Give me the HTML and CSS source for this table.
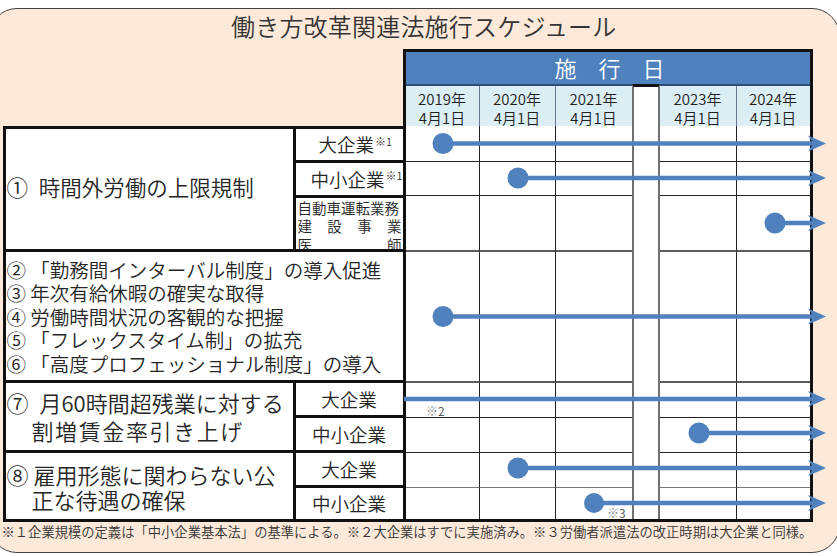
FILE: index.html
```html
<!DOCTYPE html>
<html lang="ja">
<head>
<meta charset="utf-8">
<title>働き方改革関連法施行スケジュール</title>
<link rel="stylesheet" href="styles.css">
</head>
<body>
<div class="frame">
  <div class="title">働き方改革関連法施行スケジュール</div>

  <div class="head">
    <div class="bar">施　行　日</div>
    <div class="dates">
      <div class="d">2019年<br>4月1日</div>
      <div class="d">2020年<br>4月1日</div>
      <div class="d">2021年<br>4月1日</div>
      <div class="d-gap"></div>
      <div class="d">2023年<br>4月1日</div>
      <div class="d">2024年<br>4月1日</div>
    </div>
  </div>

  <div class="body">
    <div class="lt">
      <div class="grp g1">
        <div class="lbl lbl-a">①&#8194;時間外労働の上限規制</div>
        <div class="subs">
          <div class="sub s-a1"><span class="sub-t">大企業</span><span class="sup">※1</span></div>
          <div class="sub s-a2"><span class="sub-t">中小企業</span><span class="sup">※1</span></div>
          <div class="sub s-a3">
            <div class="jl">自動車運転業務</div>
            <div class="jl jd"><span>建</span><span>設</span><span>事</span><span>業</span></div>
            <div class="jl jd"><span>医</span><span>師</span></div>
          </div>
        </div>
      </div>
      <div class="grp g2">
        <div class="lbl lbl-b">
          <div>② 「勤務間インターバル制度」の導入促進</div>
          <div>③ 年次有給休暇の確実な取得</div>
          <div>④ 労働時間状況の客観的な把握</div>
          <div>⑤ 「フレックスタイム制」の拡充</div>
          <div>⑥ 「高度プロフェッショナル制度」の導入</div>
        </div>
      </div>
      <div class="grp g3">
        <div class="lbl lbl-c">
          <div>⑦&#8194;月60時間超残業に対する</div>
          <div class="ind wide">割増賃金率引き上げ</div>
        </div>
        <div class="subs">
          <div class="sub s-c1 ctr">大企業</div>
          <div class="sub s-c2 ctr">中小企業</div>
        </div>
      </div>
      <div class="grp g4">
        <div class="lbl lbl-d">
          <div>⑧ 雇用形態に関わらない公</div>
          <div class="ind">正な待遇の確保</div>
        </div>
        <div class="subs">
          <div class="sub s-d1 ctr">大企業</div>
          <div class="sub s-d2 ctr">中小企業</div>
        </div>
      </div>
    </div>

    <div class="rg">
      <div class="gap"></div>
      <div class="c"></div><div class="c"></div><div class="c"></div><div class="c"></div><div class="c"></div>
      <div class="c"></div><div class="c"></div><div class="c"></div><div class="c"></div><div class="c"></div>
      <div class="c"></div><div class="c"></div><div class="c"></div><div class="c"></div><div class="c"></div>
      <div class="c"></div><div class="c"></div><div class="c"></div><div class="c"></div><div class="c"></div>
      <div class="c"></div><div class="c"></div><div class="c"></div><div class="c"></div><div class="c"></div>
      <div class="c"></div><div class="c"></div><div class="c"></div><div class="c"></div><div class="c"></div>
      <div class="c"></div><div class="c"></div><div class="c"></div><div class="c"></div><div class="c"></div>
      <div class="c"></div><div class="c"></div><div class="c"></div><div class="c"></div><div class="c"></div>
    </div>
  </div>

  <div class="note">※１企業規模の定義は「中小企業基本法」の基準による。※２大企業はすでに実施済み。※３労働者派遣法の改正時期は大企業と同様。</div>
</div>

<svg class="arrows" width="837" height="556" viewBox="0 0 837 556" aria-hidden="true">
  <defs>
    <path id="ah" d="M-18 -8 L0 0 L-18 8 L-12.5 0 Z"/>
  </defs>
  <g stroke="#4f81bd" stroke-width="4.5">
    <line x1="443" y1="143.5" x2="816" y2="143.5"/>
    <line x1="518" y1="178" x2="816" y2="178"/>
    <line x1="775" y1="223" x2="816" y2="223"/>
    <line x1="443" y1="316.5" x2="816" y2="316.5"/>
    <line x1="404" y1="399" x2="816" y2="399"/>
    <line x1="699" y1="433" x2="816" y2="433"/>
    <line x1="518" y1="468" x2="816" y2="468"/>
    <line x1="594" y1="503" x2="816" y2="503"/>
  </g>
  <g fill="#4f81bd">
    <circle cx="443" cy="143.5" r="10.5"/>
    <circle cx="518" cy="178" r="10.5"/>
    <circle cx="775" cy="223" r="10.5"/>
    <circle cx="443" cy="316.5" r="10.5"/>
    <circle cx="699" cy="433" r="10.5"/>
    <circle cx="518" cy="468" r="10.5"/>
    <circle cx="594" cy="503" r="10"/>
    <use href="#ah" x="826" y="143.5"/>
    <use href="#ah" x="826" y="178"/>
    <use href="#ah" x="826" y="223"/>
    <use href="#ah" x="826" y="316.5"/>
    <use href="#ah" x="826" y="399"/>
    <use href="#ah" x="826" y="433"/>
    <use href="#ah" x="826" y="468"/>
    <use href="#ah" x="826" y="503"/>
  </g>
  <text class="mark" x="426" y="416"><tspan class="kome">※</tspan>2</text>
  <text class="mark" x="607" y="518"><tspan class="kome">※</tspan>3</text>
</svg>
</body>
</html>
```

FILE: styles.css
```css
* {
  box-sizing: border-box;
}

html, body {
  margin: 0;
  padding: 0;
  overflow: hidden;
  background: #ffffff;
}

body {
  position: relative;
  width: 837px;
  height: 556px;
  font-family: "Noto Sans CJK JP", "Noto Sans", sans-serif;
  font-weight: 350;
  color: #262626;
}

.frame {
  margin: 8px 0 0 -11px;
  width: 851px;
  height: 545px;
  padding: 0 0 0 12.5px;
  border: 1.5px solid #404040;
  border-radius: 28px;
  background: #fde9d9;
}

.title {
  height: 39.5px;
  line-height: 34px;
  padding-left: 6px;
  text-align: center;
  font-size: 24px;
  color: #333333;
  letter-spacing: 0.2px;
}

/* ===== date header ===== */
.head {
  margin-left: 400px;
  width: 410px;
  border: 3px solid #111111;
  border-bottom: none;
}

.bar {
  height: 34px;
  background: #4f81bd;
  border-bottom: 2px solid #2f4f78;
  color: #ffffff;
  font-size: 22px;
  line-height: 31px;
  text-align: center;
  padding-left: 4px;
}

.dates {
  display: grid;
  grid-template-columns: 74px 76px 76px 28px 77px 73px;
  height: 40px;
}

.d {
  background: #dbeef4;
  border-right: 1px solid #66768c;
  font-size: 15px;
  line-height: 19px;
  padding-top: 3px;
  text-align: center;
  color: #1f1f1f;
}

.d:nth-child(3),
.d:nth-child(6) {
  border-right: none;
}

.d-gap {
  margin-top: -2px;
  background: #ffffff;
  border-top: 3px solid #111111;
  border-left: 2px solid #707070;
  border-right: 2px solid #707070;
}

/* ===== body ===== */
.body {
  display: flex;
}

.lt {
  width: 403px;
  height: 396px;
  border: 3px solid #111111;
  background: #ffffff;
  display: flex;
  flex-direction: column;
}

.grp {
  display: flex;
  border-top: 3px solid #111111;
}

.grp:first-child {
  border-top: none;
}

.g1 { height: 120px; }
.g2 { height: 131px; }
.g3 { height: 70px; }
.g4 { flex: 1; }

.lbl {
  flex: 1;
  display: flex;
  flex-direction: column;
  justify-content: center;
  padding-left: 1px;
  white-space: nowrap;
  overflow: hidden;
}

.lbl-a {
  font-size: 21.5px;
  padding-bottom: 4px;
}

.lbl-b {
  justify-content: flex-start;
  font-size: 19.5px;
  line-height: 23.6px;
  padding-top: 6px;
}

.lbl-c {
  font-size: 22px;
  line-height: 28px;
}

.lbl-d {
  font-size: 22px;
  line-height: 25px;
  padding-top: 2px;
}

.ind {
  padding-left: 25px;
}

.wide {
  letter-spacing: 1.6px;
}

.subs {
  width: 110px;
  border-left: 3px solid #111111;
  display: flex;
  flex-direction: column;
}

.sub {
  border-top: 3px solid #111111;
  display: flex;
  align-items: center;
  overflow: hidden;
  white-space: nowrap;
  font-size: 18.5px;
}

.sub:first-child {
  border-top: none;
}

.s-a1 { height: 31px; padding-left: 23px; }
.s-a2 { height: 35px; padding-left: 15px; }
.s-a3 {
  flex: 1;
  font-size: 14.5px;
  line-height: 18.5px;
  padding: 1px 1px 0 2px;
  display: block;
}

.s-c1 { height: 32px; }
.s-c2 { flex: 1; }
.s-d1 { height: 32px; }
.s-d2 { flex: 1; }

.ctr {
  justify-content: center;
}

.sup {
  font-size: 11px;
  align-self: flex-start;
  margin-top: 4px;
  margin-left: 1px;
  color: #333333;
}

.jl {
  height: 18.5px;
}

.jd {
  display: flex;
  justify-content: space-between;
}

/* ===== right grid ===== */
.rg {
  width: 407px;
  height: 396px;
  border-right: 3px solid #111111;
  border-bottom: 3px solid #111111;
  background: #ffffff;
  display: grid;
  grid-template-columns: 74px 76px 76px 28px 77px 73px;
  grid-template-rows: 36px 34px 56px 131px 35px 35px 35px 31px;
}

.gap {
  grid-column: 4;
  grid-row: 1 / -1;
  border-left: 2px solid #707070;
  border-right: 2px solid #707070;
}

.c {
  border-right: 1px solid #222222;
  border-bottom: 1px solid #222222;
}

.c:nth-child(5n+4),
.c:nth-child(5n+6) {
  border-right: none;
}

.c:nth-child(n+12):nth-child(-n+21) {
  border-bottom: 2px solid #5a5a5a;
}

.c:nth-child(n+32):nth-child(-n+36) {
  border-bottom-color: #777777;
}

.c:nth-child(n+37) {
  border-bottom: none;
}

/* ===== footnote ===== */
.note {
  margin: 2px 0 0 -1px;
  font-size: 13.3px;
  line-height: 16px;
  color: #333333;
  white-space: nowrap;
}

/* ===== arrow overlay ===== */
.arrows {
  position: absolute;
  left: 0;
  top: 0;
}

.mark {
  font-family: "Noto Sans CJK JP", "Noto Sans", sans-serif;
  font-size: 12px;
  fill: #444444;
}

.kome {
  fill: #8a8a8a;
}
```
